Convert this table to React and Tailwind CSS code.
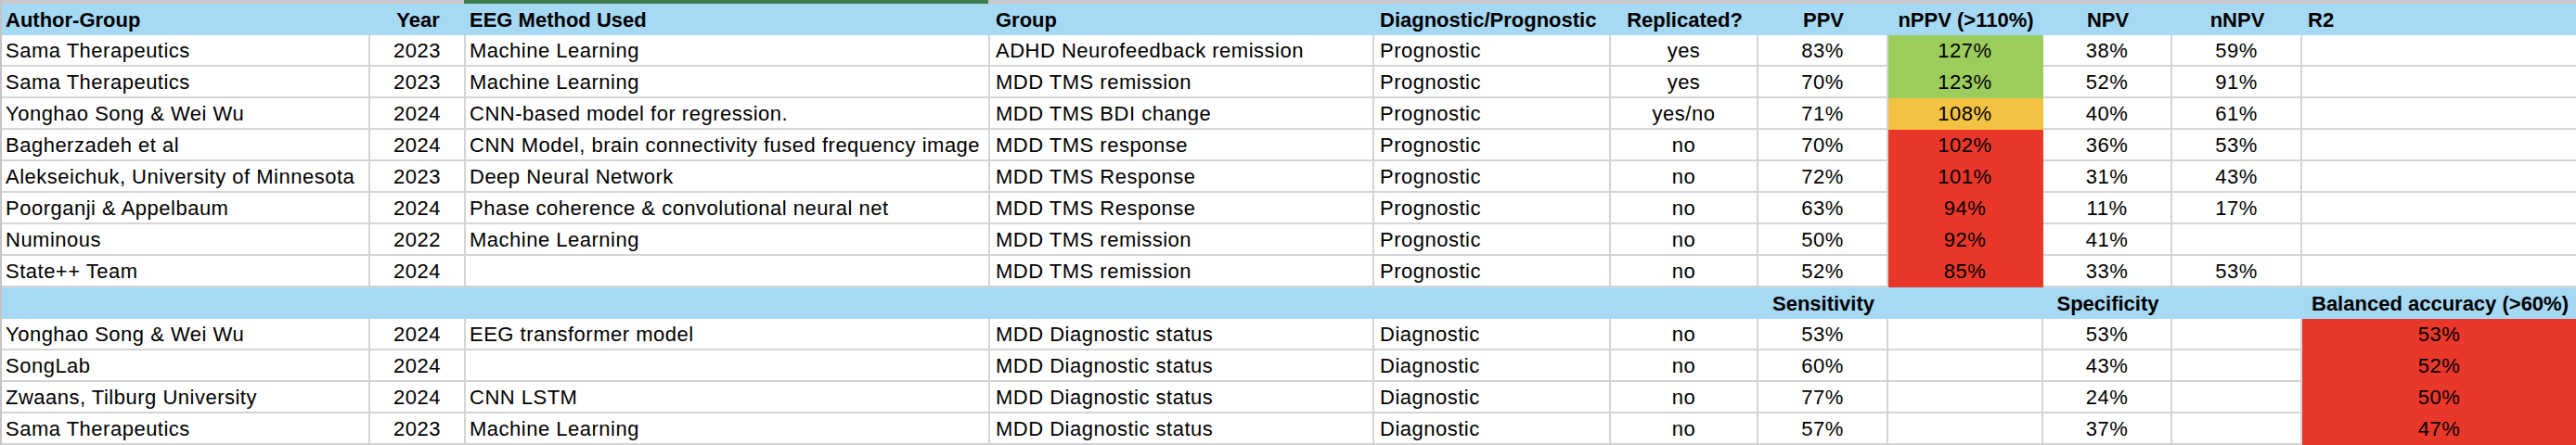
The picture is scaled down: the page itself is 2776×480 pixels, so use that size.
import React from "react";

const W = ["w-[397px]", "w-[103px]", "w-[565px]", "w-[414px]", "w-[255px]", "w-[159px]", "w-[140px]", "w-[167px]", "w-[139px]", "w-[140px]", "w-[297px]"];
const AL = ["justify-start pl-[4px]", "justify-center", "justify-start pl-[4px]", "justify-start pl-[6px]", "justify-start pl-[6px]", "justify-center", "justify-center", "justify-center", "justify-center", "justify-center", "justify-start pl-[6px]"];

const FILL = {
  g: "bg-[#9bcc5c] border-[#9bcc5c]",
  o: "bg-[#f4c243] border-[#f4c243]",
  r: "bg-[#e9372a] border-[#e9372a]",
};

const header = ["Author-Group", "Year", "EEG Method Used", "Group", "Diagnostic/Prognostic", "Replicated?", "PPV", "nPPV (>110%)", "NPV", "nNPV", "R2"];

const rows = [
  [["Sama Therapeutics", "2023", "Machine Learning", "ADHD Neurofeedback remission", "Prognostic", "yes", "83%", "127%", "38%", "59%", ""], { 7: "g" }],
  [["Sama Therapeutics", "2023", "Machine Learning", "MDD TMS remission", "Prognostic", "yes", "70%", "123%", "52%", "91%", ""], { 7: "g" }],
  [["Yonghao Song & Wei Wu", "2024", "CNN-based model for regression.", "MDD TMS BDI change", "Prognostic", "yes/no", "71%", "108%", "40%", "61%", ""], { 7: "o" }],
  [["Bagherzadeh et al", "2024", "CNN Model, brain connectivity fused frequency image", "MDD TMS response", "Prognostic", "no", "70%", "102%", "36%", "53%", ""], { 7: "r" }],
  [["Alekseichuk, University of Minnesota", "2023", "Deep Neural Network", "MDD TMS Response", "Prognostic", "no", "72%", "101%", "31%", "43%", ""], { 7: "r" }],
  [["Poorganji & Appelbaum", "2024", "Phase coherence & convolutional neural net", "MDD TMS Response", "Prognostic", "no", "63%", "94%", "11%", "17%", ""], { 7: "r" }],
  [["Numinous", "2022", "Machine Learning", "MDD TMS remission", "Prognostic", "no", "50%", "92%", "41%", "", ""], { 7: "r" }],
  [["State++ Team", "2024", "", "MDD TMS remission", "Prognostic", "no", "52%", "85%", "33%", "53%", ""], { 7: "r" }],
];

const header2 = ["", "", "", "", "", "", "Sensitivity", "", "Specificity", "", "Balanced accuracy (>60%)"];
const AL2 = AL.map((a, i) => (i === 10 ? "justify-center" : a));

const rows2 = [
  [["Yonghao Song & Wei Wu", "2024", "EEG transformer model", "MDD Diagnostic status", "Diagnostic", "no", "53%", "", "53%", "", "53%"], { 10: "r" }],
  [["SongLab", "2024", "", "MDD Diagnostic status", "Diagnostic", "no", "60%", "", "43%", "", "52%"], { 10: "r" }],
  [["Zwaans, Tilburg University", "2024", "CNN LSTM", "MDD Diagnostic status", "Diagnostic", "no", "77%", "", "24%", "", "50%"], { 10: "r" }],
  [["Sama Therapeutics", "2023", "Machine Learning", "MDD Diagnostic status", "Diagnostic", "no", "57%", "", "37%", "", "47%"], { 10: "r" }],
];

function BlueRow({ cells, align }) {
  return (
    <div className="flex h-[34px] bg-[#a6d9f4] font-bold text-[22px] text-black">
      {cells.map((c, i) => (
        <div key={i} className={`${W[i]} ${align[i]} shrink-0 flex items-center whitespace-nowrap overflow-hidden`}>
          {c}
        </div>
      ))}
    </div>
  );
}

function DataRow({ cells, fills, align }) {
  return (
    <div className="flex h-[34px] text-[22px] tracking-[0.5px] text-black">
      {cells.map((c, i) => {
        const f = fills[i];
        const cls = f ? FILL[f] : "bg-white border-[#d4d4d4]";
        return (
          <div
            key={i}
            className={`${W[i]} ${align[i]} ${cls} shrink-0 flex items-center border-r-2 border-b-2 whitespace-nowrap overflow-hidden`}
          >
            {c}
          </div>
        );
      })}
    </div>
  );
}

export default function App() {
  return (
    <div
      className="w-[2776px] h-[480px] overflow-hidden bg-white border-l-2 border-[#c4c4c4]"
      style={{ fontFamily: '"Liberation Sans", Arial, sans-serif' }}
    >
      <div className="flex h-[4px] bg-[#c9c9c9]">
        <div className="w-[498px] shrink-0" />
        <div className="w-[565px] shrink-0 bg-[#3f7d51]" />
      </div>
      <BlueRow cells={header} align={AL} />
      {rows.map(([cells, fills], i) => (
        <DataRow key={i} cells={cells} fills={fills} align={AL} />
      ))}
      <BlueRow cells={header2} align={AL2} />
      {rows2.map(([cells, fills], i) => (
        <DataRow key={i} cells={cells} fills={fills} align={AL2} />
      ))}
    </div>
  );
}
